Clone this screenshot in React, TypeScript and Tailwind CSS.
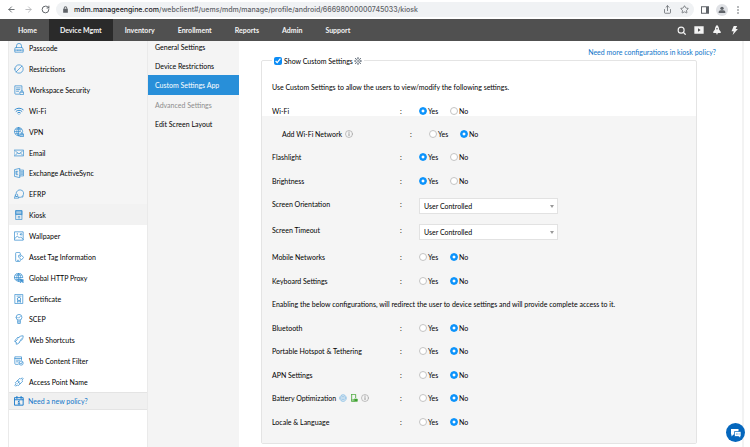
import { useState } from 'react';
import type { ReactNode } from 'react';
import { ArrowLeft, ArrowRight, Ban, RotateCw, Share, Star, Wifi } from 'lucide-react';

interface IconProps {
  children: ReactNode;
  className?: string;
}

// 24x24 line icon
function Icon({ children, className = 'size-[10px]' }: IconProps) {
  return (
    <svg
      className={`${className} shrink-0`}
      viewBox="0 0 24 24"
      fill="none"
      stroke="currentColor"
      strokeWidth={1.8}
      strokeLinecap="round"
      strokeLinejoin="round"
      aria-hidden="true"
    >
      {children}
    </svg>
  );
}

const navItems = ['Home', 'Device Mgmt', 'Inventory', 'Enrollment', 'Reports', 'Admin', 'Support'];

const policies: { name: string; icon: ReactNode }[] = [
  {
    name: 'Passcode',
    icon: (
      <Icon>
        <path d="M6 11V7a6 6 0 0 1 12 0v4M4 11h16l2 4v7H2v-7zM2 17h20M8 17v1M12 17v1M16 17v1" />
      </Icon>
    ),
  },
  { name: 'Restrictions', icon: <Ban className="size-[10px] -scale-x-100" strokeWidth={1.8} /> },
  {
    name: 'Workspace Security',
    icon: (
      <Icon>
        <path d="M12 22H4a2 2 0 0 1-2-2V2h17v10M6 7h9M6 11h8M6 15h5M15 17h8v6h-8zM17 17v-2a2 2 0 0 1 4 0v2" />
      </Icon>
    ),
  },
  { name: 'Wi-Fi', icon: <Wifi className="size-[10px]" strokeWidth={2.4} /> },
  {
    name: 'VPN',
    icon: (
      <Icon>
        <path d="M13 21A10 10 0 1 1 21 11M2 11h13M11 1v20M11 1c-6 5-6 15 0 20M11 1c3 3 4 6 4 9M4 5h14M4 16h8" />
        <path d="M15 17h8v6h-8zM17 17v-2a2 2 0 0 1 4 0v2" fill="currentColor" fillOpacity={0.4} />
      </Icon>
    ),
  },
  {
    name: 'Email',
    icon: (
      <Icon>
        <path d="M1 5h22v14H1zM4 8l8 6 8-6M4 16l4-3M20 16l-4-3" />
      </Icon>
    ),
  },
  {
    name: 'Exchange ActiveSync',
    icon: (
      <Icon>
        <path d="M13 1 1 4v16l12 3zM5 8v8h4M5 8h4M5 12h3M13 5h10v14H13M16 9h5M16 12h5M16 15h5" />
      </Icon>
    ),
  },
  {
    name: 'EFRP',
    icon: (
      <Icon>
        <path d="M5 10a9 9 0 1 1 7 10M20 20l2-3M1 22h10v-3l-3-1H4l-3 1zM3 15a3 3 0 1 0 6 0 3 3 0 0 0-6 0" />
      </Icon>
    ),
  },
  {
    name: 'Kiosk',
    icon: (
      <Icon>
        <path d="M5 1h14v22H5zM5 11h14M10 19h4M10 16h4" />
        <path d="M5 2h14v8H5z" fill="currentColor" fillOpacity={0.4} />
      </Icon>
    ),
  },
  {
    name: 'Wallpaper',
    icon: (
      <Icon>
        <path d="M2 2h20v20H2zM2 18l6-6 5 5 3-3 6 6M8 6v2M15 8a2 2 0 1 0 4 0 2 2 0 0 0-4 0" />
      </Icon>
    ),
  },
  {
    name: 'Asset Tag Information',
    icon: (
      <Icon>
        <path d="M15 19v2a2 2 0 0 1-2 2H6a2 2 0 0 1-2-2V3a2 2 0 0 1 2-2h7a2 2 0 0 1 2 2v3M8 20h3M12 8l5-1 6 6-5 6-6-6zM15 11h1" />
      </Icon>
    ),
  },
  {
    name: 'Global HTTP Proxy',
    icon: (
      <Icon>
        <path d="M13 20A10 10 0 1 1 21 11M1 11h19M11 1v19M11 1c-6 5-6 14 0 19M11 1c4 3 5 6 5 10M4 5h14M4 16h9" />
        <path d="m14 14 9 3-3 2 3 3-2 1-3-3-2 3z" fill="currentColor" />
      </Icon>
    ),
  },
  {
    name: 'Certificate',
    icon: (
      <Icon>
        <path d="M3 1h18v22H3zM7 5h2M15 5h2M12 4v3M8 12a4 4 0 1 0 8 0 4 4 0 0 0-8 0M9 15l-1 5 4-2 4 2-1-5" />
      </Icon>
    ),
  },
  {
    name: 'SCEP',
    icon: (
      <Icon>
        <path d="M5 8a7 7 0 1 0 14 0A7 7 0 0 0 5 8M9 8l2 2 4-4M9 15v8h6v-8M9 19h6" />
      </Icon>
    ),
  },
  {
    name: 'Web Shortcuts',
    icon: (
      <Icon>
        <path d="M11 6c4-4 7-4 11-4 0 4-1 8-4 11M14 17c-3 4-6 5-9 5l1-4-4-2c0-3 2-6 6-9M8 11l-5 5M18 9l-5 8M8 7l4-1" />
      </Icon>
    ),
  },
  {
    name: 'Web Content Filter',
    icon: (
      <Icon>
        <path d="M10 20H4a2 2 0 0 1-2-2V2h16v8M2 6h16M6 10h8M6 14h4M12 17a5 5 0 1 0 10 0 5 5 0 0 0-10 0M15 17l2 2 3-4" />
      </Icon>
    ),
  },
  {
    name: 'Access Point Name',
    icon: (
      <Icon>
        <path d="M9 8l5-5 2 2 4-3 2 2-3 4 2 2-6 6zM12 11l-3-3-6 6 2 2-3 4 2 2 4-3 2 2 5-5M9 15l3-3" />
      </Icon>
    ),
  },
];

const sections = ['General Settings', 'Device Restrictions', 'Custom Settings App', 'Advanced Settings', 'Edit Screen Layout'];

type Answer = 'yes' | 'no';

const defaults: Record<string, Answer> = {
  'Wi-Fi': 'yes',
  'Add Wi-Fi Network': 'no',
  Flashlight: 'yes',
  Brightness: 'yes',
  'Mobile Networks': 'no',
  'Keyboard Settings': 'no',
  Bluetooth: 'no',
  'Portable Hotspot & Tethering': 'no',
  'APN Settings': 'no',
  'Battery Optimization': 'no',
  'Locale & Language': 'no',
};

function InfoIcon() {
  return (
    <Icon className="size-2 text-[#9a9a9a]">
      <circle cx="12" cy="12" r="10.5" />
      <path d="M12 11v6M12 6v1" strokeWidth={3} />
    </Icon>
  );
}

interface RadioRowProps {
  label: string;
  nested?: boolean;
  icons?: ReactNode;
  className?: string;
}

function RadioRow({ label, nested = false, icons, className = 'odd:h-[23px] even:h-6' }: RadioRowProps) {
  const [value, setValue] = useState<Answer>(defaults[label]);

  return (
    <div
      role="radiogroup"
      aria-label={label}
      className={`flex items-center ${nested ? 'pl-5' : 'pl-[10px]'} ${className}`}
    >
      <div className="flex w-32 items-center gap-[3px]">
        <span>{label}</span>
        {icons}
      </div>
      <span className="w-[19px]">:</span>
      {(['yes', 'no'] as Answer[]).map(option => (
        <label key={option} className="flex w-[31px] items-center gap-px">
          <input
            type="radio"
            name={label}
            checked={value === option}
            onChange={() => setValue(option)}
            className="size-2 shrink-0 appearance-none rounded-full border border-[#c4c4c4] bg-white checked:border-[#0c93fb] checked:bg-[radial-gradient(circle,white_26%,#0c93fb_42%)]"
          />
          {option === 'yes' ? 'Yes' : 'No'}
        </label>
      ))}
    </div>
  );
}

function SelectRow({ id, label }: { id: string; label: string }) {
  return (
    <div className="flex items-start pl-[10px] odd:h-[27px] even:h-[26px]">
      <label htmlFor={id} className="flex h-6 w-32 items-center">
        {label}
      </label>
      <span className="flex h-6 w-[19px] items-center">:</span>
      <div className="relative mt-[6px] w-[139px]">
        <select
          id={id}
          className="block h-4 w-full appearance-none border border-[#e2e2e2] bg-white pl-1"
        >
          <option>User Controlled</option>
          <option>Always On</option>
          <option>Always Off</option>
        </select>
        <span className="pointer-events-none absolute top-[7px] right-1 border-x-2 border-t-3 border-x-transparent border-t-[#999]" />
      </div>
    </div>
  );
}

function BrowserBar() {
  return (
    <div className="flex h-[19px] items-center bg-white pr-2 pl-[7px] text-[#5f6368]">
      <div className="flex w-[49px] items-center gap-2">
        <button type="button" aria-label="Back">
          <ArrowLeft className="size-[9px]" strokeWidth={2.4} />
        </button>
        <button type="button" aria-label="Forward" className="text-[#b4b6b9]">
          <ArrowRight className="size-[9px]" strokeWidth={2.4} />
        </button>
        <button type="button" aria-label="Reload">
          <RotateCw className="size-[9px]" strokeWidth={2.6} />
        </button>
      </div>
      <div className="flex h-[15px] flex-1 items-center rounded-full bg-[#f0f2f4] pr-[5px] pl-[6px]">
        <svg className="size-[7px]" viewBox="0 0 24 24" fill="currentColor" aria-hidden="true">
          <path d="M4 9h2V7a6 6 0 0 1 12 0v2h2v14H4zm5 0h6V7a3 3 0 0 0-6 0z" />
        </svg>
        <span className="flex-1 pl-[5px] font-[Inter,sans-serif] font-medium">
          <span className="text-[#202124]">mdm.manageengine.com</span>
          /webclient#/uems/mdm/manage/profile/android/66698000000745033/kiosk
        </span>
        <button type="button" aria-label="Share" className="mr-2">
          <Share className="size-[9px]" strokeWidth={2} />
        </button>
        <button type="button" aria-label="Bookmark">
          <Star className="size-[9px]" strokeWidth={2} />
        </button>
      </div>
      <div className="flex items-center pl-[7px]">
        <button type="button" aria-label="Side panel">
          <svg className="size-2" viewBox="0 0 24 24" fill="currentColor" aria-hidden="true">
            <path d="M0 1h24v22H0zm3 3v16h12V4z" fillRule="evenodd" />
          </svg>
        </button>
        <button type="button" aria-label="Profile" className="ml-[7px] rounded-full bg-[#dfe1e5] p-[2px]">
          <svg className="size-2" viewBox="0 0 24 24" fill="currentColor" aria-hidden="true">
            <circle cx="12" cy="7" r="5" />
            <path d="M2 21v-3c0-4 6-5 10-5s10 1 10 5v3z" />
          </svg>
        </button>
        <button type="button" aria-label="Menu" className="ml-[6px]">
          <svg className="size-2" viewBox="0 0 24 24" fill="currentColor" aria-hidden="true">
            <circle cx="12" cy="3" r="2.4" />
            <circle cx="12" cy="12" r="2.4" />
            <circle cx="12" cy="21" r="2.4" />
          </svg>
        </button>
      </div>
    </div>
  );
}

function NavBar() {
  return (
    <nav className="flex h-[22px] gap-px bg-[#505050] pr-[11px] pl-[7px] font-bold text-[#f4f4f4]">
      {navItems.map(item => (
        <a
          key={item}
          href="#"
          className={`flex items-center px-[11px] ${item === 'Device Mgmt' ? 'bg-[#2a2a2a]' : ''}`}
        >
          {item}
        </a>
      ))}
      <div className="ml-auto flex items-center gap-2">
        <button type="button" aria-label="Search">
          <Icon className="size-[9px]">
            <circle cx="11" cy="11" r="8" strokeWidth={3} />
            <path d="m17 17 5 5" strokeWidth={3.4} />
          </Icon>
        </button>
        <button type="button" aria-label="Videos">
          <svg className="h-2 w-[10px]" viewBox="0 0 30 24" fill="currentColor" aria-hidden="true">
            <path d="M1 1h28v22H1zm11 6v10l8-5z" fillRule="evenodd" />
          </svg>
        </button>
        <button type="button" aria-label="What's new">
          <svg className="size-[10px]" viewBox="0 0 24 24" fill="currentColor" aria-hidden="true">
            <path d="M12 0c4 3 5 7 5 11l4 5v3h-7l-2 5-2-5H3v-3l4-5c0-4 1-8 5-11zm0 7a2 2 0 1 0 0 4 2 2 0 0 0 0-4z" fillRule="evenodd" />
          </svg>
        </button>
        <button type="button" aria-label="Quick actions">
          <svg className="size-[9px]" viewBox="0 0 24 24" fill="currentColor" aria-hidden="true">
            <path d="M10 0h9l-4 8h6L7 24l3-10H4z" />
          </svg>
        </button>
      </div>
    </nav>
  );
}

function PolicySidebar() {
  return (
    <aside className="w-[140px] shrink-0 border-x border-[#eaeaea] bg-white">
      <ul className="-mt-1">
        {policies.map(({ name, icon }, i) => (
          <li key={name} className={`h-[21px] nth-[7n]:h-5 ${i < 8 ? 'bg-[#f5f5f5]' : ''} ${name === 'Kiosk' ? 'bg-[#f2f2f2]' : ''}`}>
            <a href="#" className="flex h-full items-center gap-[5px] pl-[5px]">
              <span className="text-[#3a8fd0]">{icon}</span>
              {name}
            </a>
          </li>
        ))}
      </ul>
      <a
        href="#"
        className="flex h-[18px] items-center gap-1 border-y border-[#e4e4e4] bg-[#f0f0f0] pl-[5px] text-[#0f75c9]"
      >
        <Icon>
          <path d="M2 4h20v18H2zM2 9h20M7 1v5M17 1v5M12 12v7M10 14l2-2M10 19h4" strokeWidth={2.2} />
        </Icon>
        Need a new policy?
      </a>
    </aside>
  );
}

function SectionMenu() {
  return (
    <aside className="w-[91px] shrink-0 bg-[#f4f4f4]">
      <ul className="-mt-1">
        {sections.map(section => (
          <li key={section} className="h-[19px] nth-[3n]:h-5">
            <a
              href="#"
              className={`flex h-full items-center pl-[7px] ${
                section === 'Custom Settings App'
                  ? 'bg-[#288fd9] text-white'
                  : section === 'Advanced Settings'
                  ? 'text-[#8d8d8d]'
                  : ''
              }`}
            >
              {section}
            </a>
          </li>
        ))}
      </ul>
    </aside>
  );
}

export default function App() {
  const [showCustom, setShowCustom] = useState(true);

  return (
    <div className="flex min-h-screen flex-col bg-white font-[Lato,sans-serif] text-[7px] leading-[10px] text-black">
      <BrowserBar />
      <NavBar />
      <div className="flex flex-1 overflow-hidden pl-2">
        <PolicySidebar />
        <SectionMenu />
        <main className="flex-1 border-r-2 border-[#f3f3f3] pr-[45px] pl-[22px]">
          <div className="-mr-[19px] flex h-[14px] items-end justify-end leading-[6px]">
            <a href="#" className="text-[#0f75c9]">Need more configurations in kiosk policy?</a>
          </div>
          <fieldset className="rounded-xs border border-[#e4e4e4]">
            <legend className="ml-[10px] flex h-[11px] items-center gap-px px-[2px]">
              <label className="flex items-center gap-[2px]">
                <input
                  type="checkbox"
                  checked={showCustom}
                  onChange={e => setShowCustom(e.target.checked)}
                  className="size-2 accent-[#0c8cf5]"
                />
                Show Custom Settings
              </label>
              <Icon className="size-2 text-[#6c7682]">
                <circle cx="12" cy="12" r="7" />
                <circle cx="12" cy="12" r="2" />
                <path d="M12 1v4M12 19v4M1 12h4M19 12h4M4 4l3 3M17 17l3 3M4 20l3-3M17 7l3-3" strokeWidth={3} />
              </Icon>
            </legend>
            <p className="mt-4 mb-[13px] pl-[10px]">
              Use Custom Settings to allow the users to view/modify the following settings.
            </p>
            <RadioRow label="Wi-Fi" className="h-[11px]" />
            <div className="bg-[#f5f5f5] pt-[6px] pb-[10px]">
              <RadioRow label="Add Wi-Fi Network" nested icons={<InfoIcon />} />
              <RadioRow label="Flashlight" />
              <RadioRow label="Brightness" />
              <SelectRow id="orientation" label="Screen Orientation" />
              <SelectRow id="timeout" label="Screen Timeout" />
              <RadioRow label="Mobile Networks" />
              <RadioRow label="Keyboard Settings" />
              <p className="flex h-6 items-center pl-[10px]">
                Enabling the below configurations, will redirect the user to device settings and will provide complete access to it.
              </p>
              <RadioRow label="Bluetooth" />
              <RadioRow label="Portable Hotspot & Tethering" />
              <RadioRow label="APN Settings" />
              <RadioRow
                label="Battery Optimization"
                icons={
                  <>
                    <Icon className="size-2 text-[#58a6df]">
                      <path d="M3 9c2-9 16-9 18 0v7c-2 8-16 8-18 0zM3 12h18M8 17h8M8 7h8" />
                    </Icon>
                    <Icon className="size-2 text-[#3ea32f]">
                      <path d="M5 1h12v10M5 1v22h7M5 18h6" strokeWidth={2.4} />
                      <path d="M13 15h9v7h-9z" fill="currentColor" />
                    </Icon>
                    <InfoIcon />
                  </>
                }
              />
              <RadioRow label="Locale & Language" />
            </div>
          </fieldset>
        </main>
        <div className="w-[6px]" />
      </div>
      <button
        type="button"
        aria-label="Chat"
        className="fixed right-[5px] bottom-[5px] flex size-[19px] items-center justify-center rounded-full bg-[#0567bd]"
      >
        <svg className="size-3" viewBox="0 0 24 24" aria-hidden="true">
          <path d="M2 4h15v11H7l-4 4v-4H2z" fill="#fff" />
          <path d="M9 9h13v10h-1v3l-4-3H9z" fill="#fff" stroke="#0567bd" strokeWidth={1.4} />
          <path d="M12 14h7" stroke="#0567bd" strokeWidth={1.6} strokeDasharray="1.6 1.2" />
        </svg>
      </button>
    </div>
  );
}
